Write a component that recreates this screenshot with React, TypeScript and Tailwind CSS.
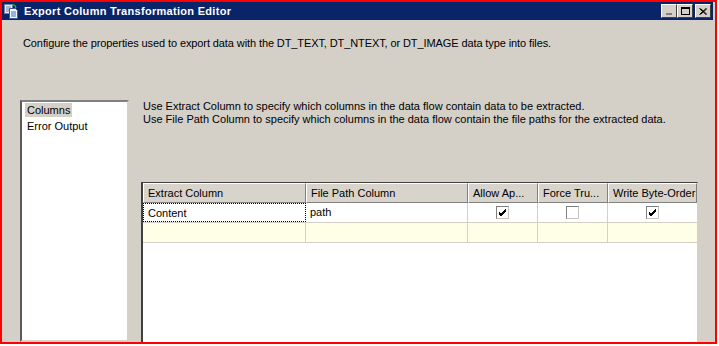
import { FC } from 'react';

const FONT = { fontFamily: '"Liberation Sans", Arial, sans-serif' };

interface GridColumn {
  label: string;
  width: string;
}

const COLUMNS: GridColumn[] = [
  { label: 'Extract Column', width: 'w-[163px]' },
  { label: 'File Path Column', width: 'w-[162px]' },
  { label: 'Allow Ap...', width: 'w-[70px]' },
  { label: 'Force Tru...', width: 'w-[70px]' },
  { label: 'Write Byte-Order', width: 'flex-1' },
];

const Checkbox: FC<{ checked: boolean }> = ({ checked }) => (
  <div className="w-[13px] h-[13px] bg-white border border-t-[#808080] border-l-[#808080] border-r-[#c8c4bc] border-b-[#c8c4bc] flex items-center justify-center">
    {checked && (
      <svg width="9" height="9" viewBox="0 0 9 9">
        <path d="M1 4 L3 6 L8 1 M1 5 L3 7 L8 2 M1 6 L3 8 L8 3" stroke="#000" strokeWidth="1" fill="none" />
      </svg>
    )}
  </div>
);

const TitleButton: FC<{ kind: 'min' | 'max' | 'close' }> = ({ kind }) => (
  <div className="w-[16px] h-[14px] bg-[#d4d0c8] border border-t-white border-l-white border-r-[#404040] border-b-[#404040] flex items-center justify-center">
    {kind === 'min' && <div className="w-[6px] h-[2px] bg-[#808080] mt-[6px]" />}
    {kind === 'max' && <div className="w-[9px] h-[8px] border border-black border-t-2" />}
    {kind === 'close' && (
      <svg width="8" height="7" viewBox="0 0 8 7">
        <path d="M0.5 0.5 L7 6.5 M1.5 0.5 L8 6.5 M7 0.5 L0.5 6.5 M8 0.5 L1.5 6.5" stroke="#000" strokeWidth="1" />
      </svg>
    )}
  </div>
);

const WindowIcon: FC = () => (
  <svg width="16" height="16" viewBox="0 0 16 16">
    <rect x="0.5" y="1.5" width="8" height="9" fill="#e8eef8" stroke="#6a7fa8" />
    <path d="M2 4h5M2 6h5M2 8h5" stroke="#6a7fa8" />
    <path d="M8 2 q3 -1 4 3" stroke="#3cb043" strokeWidth="1.2" fill="none" />
    <path d="M5.5 5.5 h6 l2 2 v8 h-8 z" fill="#f4f8ff" stroke="#3a5a9a" />
    <path d="M7 9h5M7 11h5M7 13h5" stroke="#3a6ac0" />
  </svg>
);

export default function App() {
  return (
    <div className="w-[719px] h-[346px] bg-white overflow-hidden" style={FONT}>
      <div className="w-[717px] h-[344px] border-2 border-[#ff0000] bg-[#d4d0c8] flex flex-col overflow-hidden">
        <div className="h-[18px] w-[711px] bg-[#0a246a] flex items-center px-[2px] shrink-0">
          <WindowIcon />
          <span className="ml-[4px] text-white font-bold text-[11px] tracking-[0.3px]">
            Export Column Transformation Editor
          </span>
          <div className="ml-auto flex">
            <TitleButton kind="min" />
            <TitleButton kind="max" />
            <div className="w-[2px]" />
            <TitleButton kind="close" />
          </div>
        </div>

        <div className="flex-1 flex flex-col pl-[18px] pr-[17px] min-h-0">
          <p className="mt-[17px] ml-[3px] text-[11px] leading-[13px] tracking-[-0.1px] text-black">
            Configure the properties used to export data with the DT_TEXT, DT_NTEXT, or DT_IMAGE data type into files.
          </p>

          <div className="flex mt-[50px] flex-1 min-h-0">
            <div className="w-[109px] bg-white border-2 border-t-[#808080] border-l-[#5a5a5a] border-r-[#d4d0c8] border-b-[#d4d0c8] pt-[1px] pl-[3px] text-[11px] leading-[14px]">
              <div className="inline-block align-top bg-[#d4d0c8] px-[2px] leading-[14px]">Columns</div>
              <div className="px-[2px] mt-[2px] leading-[14px]">Error Output</div>
            </div>

            <div className="ml-[12px] flex-1 flex flex-col min-w-0">
              <div className="ml-[2px] text-[11px] leading-[13px] text-black">
                <p>Use Extract Column to specify which columns in the data flow contain data to be extracted.</p>
                <p>Use File Path Column to specify which columns in the data flow contain the file paths for the extracted data.</p>
              </div>

              <div className="mt-[56px] flex-1 bg-white border border-t-[#404040] border-l-2 border-l-[#404040] border-r-[#d4d0c8] border-b-0 flex flex-col">
                <div className="flex h-[20px]">
                  {COLUMNS.map((c) => (
                    <div
                      key={c.label}
                      className={`${c.width} h-[20px] bg-[#d8d4cc] border border-t-white border-l-white border-r-[#808080] border-b-[#808080] px-[4px] text-[11px] leading-[18px] whitespace-nowrap overflow-hidden`}
                    >
                      {c.label}
                    </div>
                  ))}
                </div>

                <div className="flex h-[20px] border-b border-[#d4d0c8]">
                  <div className="w-[163px] border border-dotted border-black px-[4px] text-[11px] leading-[18px]">
                    Content
                  </div>
                  <div className="w-[162px] border-r border-[#d4d0c8] px-[4px] text-[11px] leading-[19px]">
                    path
                  </div>
                  <div className="w-[70px] border-r border-[#d4d0c8] flex items-center justify-center">
                    <Checkbox checked />
                  </div>
                  <div className="w-[70px] border-r border-[#d4d0c8] flex items-center justify-center">
                    <Checkbox checked={false} />
                  </div>
                  <div className="flex-1 flex items-center justify-center">
                    <Checkbox checked />
                  </div>
                </div>

                <div className="flex h-[20px] bg-[#ffffe8] border-b border-[#d4d0c8]">
                  <div className="w-[163px] border-r border-[#d4d0c8]" />
                  <div className="w-[162px] border-r border-[#d4d0c8]" />
                  <div className="w-[70px] border-r border-[#d4d0c8]" />
                  <div className="w-[70px] border-r border-[#d4d0c8]" />
                  <div className="flex-1" />
                </div>
              </div>
            </div>
          </div>
        </div>
      </div>
    </div>
  );
}
